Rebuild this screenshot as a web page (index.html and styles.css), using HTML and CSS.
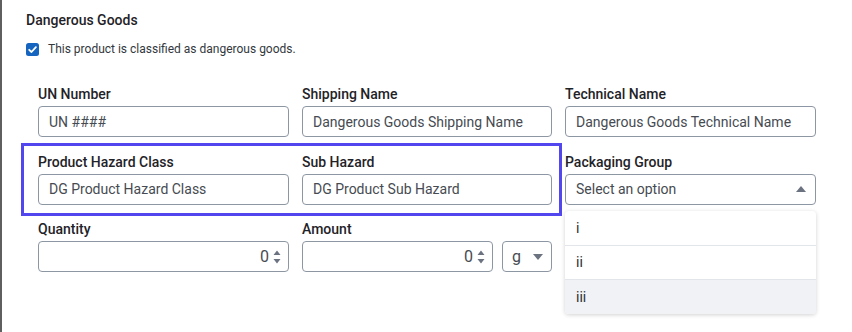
FILE: index.html
```html
<!DOCTYPE html>
<html lang="en">
<head>
<meta charset="utf-8">
<title>Dangerous Goods</title>
<link rel="stylesheet" href="styles.css">
</head>
<body>
<div class="panel">
  <h2 class="title">Dangerous Goods</h2>
  <label class="check">
    <span class="box">
      <svg viewBox="0 0 13 13" width="13" height="13"><path d="M3.2 6.8 L5.5 9 L9.9 4.2" fill="none" stroke="#fff" stroke-width="1.8" stroke-linecap="round" stroke-linejoin="round"/></svg>
    </span>
    <span>This product is classified as dangerous goods.</span>
  </label>

  <div class="grid">
    <div class="field">
      <div class="label">UN Number</div>
      <div class="input"><span class="ph">UN ####</span></div>
    </div>
    <div class="field">
      <div class="label">Shipping Name</div>
      <div class="input"><span class="ph">Dangerous Goods Shipping Name</span></div>
    </div>
    <div class="field">
      <div class="label">Technical Name</div>
      <div class="input"><span class="ph">Dangerous Goods Technical Name</span></div>
    </div>

    <div class="field">
      <div class="label">Product Hazard Class</div>
      <div class="input"><span class="ph">DG Product Hazard Class</span></div>
    </div>
    <div class="field">
      <div class="label">Sub Hazard</div>
      <div class="input"><span class="ph">DG Product Sub Hazard</span></div>
    </div>
    <div class="field select-field">
      <div class="label">Packaging Group</div>
      <div class="input select"><span class="ph">Select an option</span>
        <svg class="caret" viewBox="0 0 10 6" width="10" height="6"><path d="M0 6 L5 0 L10 6 Z" fill="#6b7280"/></svg>
      </div>
      <ul class="menu">
        <li>i</li>
        <li>ii</li>
        <li class="hover">iii</li>
      </ul>
    </div>

    <div class="field">
      <div class="label">Quantity</div>
      <div class="input number"><span class="val">0</span>
        <svg class="spin" viewBox="0 0 8 16" width="8" height="16"><path d="M0.5 6 L4 1.5 L7.5 6 Z M0.5 10 L4 14.5 L7.5 10 Z" fill="#6b7280"/></svg>
      </div>
    </div>
    <div class="field">
      <div class="label">Amount</div>
      <div class="pair">
        <div class="input number"><span class="val">0</span>
          <svg class="spin" viewBox="0 0 8 16" width="8" height="16"><path d="M0.5 6 L4 1.5 L7.5 6 Z M0.5 10 L4 14.5 L7.5 10 Z" fill="#6b7280"/></svg>
        </div>
        <div class="input unit"><span class="val">g</span>
          <svg class="caret" viewBox="0 0 10 6" width="10" height="6"><path d="M0 0 L10 0 L5 6 Z" fill="#6b7280"/></svg>
        </div>
      </div>
    </div>

    <div class="highlight"></div>
  </div>
</div>
</body>
</html>
```

FILE: styles.css
```css
* { box-sizing: border-box; }
html, body { margin: 0; padding: 0; background: #fff; }
body {
  width: 852px;
  height: 332px;
  overflow: hidden;
  border-left: 2px solid #5f5f5f;
  font-family: Roboto, "Noto Sans", "Liberation Sans", sans-serif;
  color: #1f2328;
}
.panel {
  padding: 10px 0 0 24px;
}
.title {
  margin: 0;
  font-size: 14px;
  line-height: 20px;
  font-weight: 500;
  color: #1f2328;
}
.check {
  display: flex;
  align-items: center;
  gap: 9px;
  margin-top: 9px;
  font-size: 12px;
  line-height: 20px;
  color: #33383d;
}
.check .box {
  width: 13px;
  height: 13px;
  border-radius: 2.5px;
  background: #1565c0;
  display: flex;
}
.grid {
  position: relative;
  margin: 25px 0 0 12px;
  display: grid;
  grid-template-columns: 251px 250px 251px;
  column-gap: 13px;
  row-gap: 14.5px;
}
.field { position: relative; }
.label {
  font-size: 14px;
  line-height: 20px;
  font-weight: 500;
  color: #1f2328;
  margin-bottom: 2px;
}
.input {
  height: 31px;
  border: 1px solid #8d96a3;
  border-radius: 4px;
  background: #fff;
  display: flex;
  align-items: center;
  padding: 0 10px;
  font-size: 14px;
  color: #464b52;
}
.ph { white-space: nowrap; }
.select { justify-content: space-between; padding-right: 9px; }
.number { justify-content: flex-end; padding-right: 7px; gap: 4px; }
.number .val { font-size: 16px; }
.pair { display: flex; gap: 9px; }
.pair .number { flex: 1; }
.unit { width: 50px; flex: none; justify-content: space-between; padding: 0 8px 0 9px; }
.unit .val { font-size: 16px; }
.menu {
  position: absolute;
  left: 0;
  right: 0;
  top: 59px;
  margin: 0;
  padding: 0;
  list-style: none;
  background: #fff;
  border-radius: 4px;
  box-shadow: 0 1px 4px rgba(0,0,0,0.18);
  overflow: hidden;
  z-index: 2;
}
.menu li {
  height: 34.5px;
  display: flex;
  align-items: center;
  padding-left: 11px;
  font-size: 14px;
  color: #2b2f33;
  border-top: 1px solid #e2e5ea;
}
.menu li:first-child { border-top: none; height: 34px; }
.menu li.hover { background: #f1f2f5; }
.highlight {
  position: absolute;
  left: -17px;
  top: 59px;
  width: 541px;
  height: 73px;
  border: 3px solid #5247ee;
  pointer-events: none;
}
```
